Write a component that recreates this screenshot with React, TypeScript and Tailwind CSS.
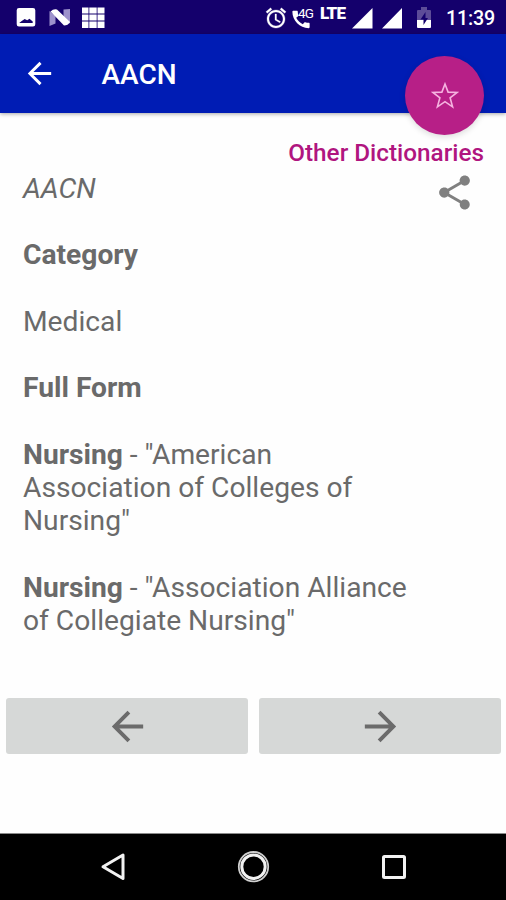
import React from "react";

const ROBOTO = "font-['Roboto','Liberation_Sans',sans-serif]";

function ArrowBack({ className }: { className: string }) {
  return (
    <svg viewBox="0 0 24 24" fill="currentColor" className={className}>
      <path d="M20 11H7.83l5.59-5.59L12 4l-8 8 8 8 1.41-1.41L7.83 13H20v-2z" />
    </svg>
  );
}

function StatusBar() {
  return (
    <div className="flex h-[34px] items-start bg-[#14006c] text-white">
      <svg viewBox="0 0 110 34" className="h-[34px] w-[110px]">
        <path
          fillRule="evenodd"
          fill="#fff"
          d="M19 8h14q2.300 0 2.300 2.300V24.200q0 2.300-2.300 2.300H19q-2.300 0-2.300-2.300V10.300Q16.700 8 19 8zM19.200 23h13.500v-1.500l-3.200-2.800-2.300 1.600-2.500-1.300-3 2z"
        />
        <path fill="#9d92cc" d="M49.500 11l6 5v7.500l-6 2.500zM63.500 9.500l6.500-.5v14.500l-6.500-4z" />
        <path fill="#fff" d="M50.500 11.500q3-3 6.500-2L70 22q-2 3.500-6 3.500z" />
        <path
          fill="#fff"
          d="M82 7.500h6.500v5.900H82zM89.300 7.500h7.400v5.900h-7.400zM97.500 7.500h7v5.900h-7zM82 14.400h6.500v6H82zM89.300 14.400h7.400v6h-7.400zM97.500 14.400h7v6h-7zM82 21.400h6.500V28H82zM89.300 21.400h7.400V28h-7.400zM97.500 21.400h7V28h-7z"
        />
      </svg>
      <div className="ml-auto flex pr-[11px]">
        <svg viewBox="0 0 24 24" fill="#fff" stroke="#fff" strokeWidth="0.300" className="mt-[5.500px] size-6">
          <path d="M22 5.720l-4.600-3.860-1.290 1.530 4.600 3.860L22 5.720zM7.880 3.390L6.600 1.860 2 5.710l1.290 1.530 4.590-3.850zM12.500 8H11v6l4.750 2.850.750-1.230-4-2.370V8zM12 4c-4.970 0-9 4.030-9 9s4.020 9 9 9c4.970 0 9-4.030 9-9s-4.030-9-9-9zm0 16c-3.870 0-7-3.130-7-7s3.130-7 7-7 7 3.130 7 7-3.130 7-7 7z" />
        </svg>
        <div className="relative ml-[1px] w-[31px]">
          <svg viewBox="0 0 24 24" fill="#fff" className="mt-[8px] h-[23px] w-6">
            <path d="M20.010 15.380c-1.230 0-2.420-.200-3.530-.560-.350-.120-.740-.030-1.010.240l-1.570 1.970c-2.830-1.350-5.480-3.900-6.890-6.830l1.950-1.660c.270-.280.350-.670.240-1.020-.370-1.110-.560-2.300-.560-3.530 0-.540-.450-.990-.990-.990H4.190C3.650 3 3 3.240 3 3.990 3 13.280 10.730 21 20.010 21c.710 0 .990-.630.990-1.180v-3.450c0-.540-.450-.990-.990-.990z" />
          </svg>
          <span className="absolute top-[6px] left-[9px] text-[13.500px] leading-[15px] tracking-[-0.8px]">4G</span>
        </div>
        <span className="w-[32px] pt-[4px] text-[17px] leading-[18px] font-black tracking-[-0.9px]">LTE</span>
        <svg viewBox="0 0 52 34" className="h-[34px] w-[52px]" fill="#fff">
          <path d="M0 28.500L20.500 8v20.500zM30 28.500L50 8v20.500z" />
        </svg>
        <svg viewBox="0 0 14 34" className="ml-[13px] h-[34px] w-[14px]">
          <path fill="#5d4c98" d="M4 7h6v3h3q1 0 1 1v9H0v-9q0-1 1-1h3z" />
          <path fill="#fff" d="M0 20h14v7q0 1-1 1H1q-1 0-1-1z" />
          <path fill="#14006c" d="M8.500 12v6H11L6.500 25v-5.500H3.500z" />
        </svg>
        <span className="ml-[15px] w-[49px] pt-[7px] text-[19.700px] leading-[23px] font-medium tracking-[-0.2px] whitespace-nowrap">
          11:39
        </span>
      </div>
    </div>
  );
}

function AppBar() {
  return (
    <header className="relative z-10 flex h-[79px] items-center bg-[#001cb4] pl-[22px] text-white shadow-[0_1px_4px_rgba(0,0,0,0.35)]">
      <ArrowBack className="size-[35px]" />
      <h1 className="ml-[44.500px] pt-[3px] text-[28px] leading-8 font-medium">AACN</h1>
      <button className="absolute top-[22px] right-[22px] flex size-[79px] items-center justify-center rounded-full bg-[#b71f87] shadow-[0_2px_6px_rgba(0,0,0,0.14)]">
        <svg viewBox="0 0 28 27" className="h-[27px] w-[28px]" fill="none" stroke="#f5b3e0" strokeWidth="1.600">
          <path d="M14 2l3.100 8.100 9.100.300-7.100 5.400 2.500 9L14 19.700 6.400 24.800l2.500-9-7.100-5.400 9.100-.300z" />
        </svg>
      </button>
    </header>
  );
}

export default function App() {
  return (
    <div className={`flex h-[900px] w-[506px] flex-col overflow-hidden bg-[#fefefe] ${ROBOTO}`}>
      <StatusBar />
      <AppBar />
      <main className="flex flex-1 flex-col">
        <a className="mt-[26px] mr-[22px] self-end text-[24.300px] leading-[28px] font-medium whitespace-nowrap text-[#b0157f]">
          Other Dictionaries
        </a>
        <div className="mt-[4px] flex h-[527px] justify-between pl-[23px]">
          <div className="mt-[0.600px] w-[395px] text-[28.200px] leading-[33.270px] text-[#6a6a6a]">
            <p className="italic">AACN</p>
            <p className="mt-[33.270px] font-bold">Category</p>
            <p className="mt-[33.270px]">Medical</p>
            <p className="mt-[33.270px] font-bold">Full Form</p>
            <p className="mt-[33.270px]">
              <b>Nursing</b> - "American
              <br />
              Association of Colleges of
              <br />
              Nursing"
            </p>
            <p className="mt-[33.270px]">
              <b>Nursing</b> - "Association Alliance
              <br />
              of Collegiate Nursing"
            </p>
          </div>
          <svg viewBox="0 0 24 24" className="mt-[1px] mr-[31px] size-[41px] shrink-0" fill="#808080">
            <path d="M18 16.080c-.760 0-1.440.300-1.960.770L8.910 12.700c.050-.230.090-.460.090-.700s-.040-.470-.090-.700l7.050-4.110c.540.500 1.250.810 2.040.810 1.660 0 3-1.340 3-3s-1.340-3-3-3-3 1.340-3 3c0 .240.040.470.090.700L8.040 9.810C7.500 9.310 6.790 9 6 9c-1.660 0-3 1.340-3 3s1.340 3 3 3c.790 0 1.500-.310 2.040-.810l7.120 4.160c-.050.210-.080.430-.080.650 0 1.610 1.310 2.920 2.920 2.920s2.920-1.310 2.920-2.920-1.310-2.920-2.920-2.920z" />
          </svg>
        </div>
        <div className="grid grid-cols-2 gap-[11px] pr-[5px] pl-[6px]">
          <button className="flex h-[56px] items-center justify-center rounded-[3px] bg-[#d6d8d7] text-[#6b6b6b]">
            <ArrowBack className="size-[47px]" />
          </button>
          <button className="flex h-[56px] items-center justify-center rounded-[3px] bg-[#d6d8d7] text-[#6b6b6b]">
            <ArrowBack className="size-[47px] rotate-180" />
          </button>
        </div>
      </main>
      <nav className="flex h-[67px] justify-center border-t border-[#8a8a8a] bg-black">
        <svg viewBox="-10 0 320 66" className="h-[66px] w-[320px]" fill="none" stroke="#f2f2f2">
          <path strokeWidth="3" strokeLinejoin="round" d="M20 21v23.500L0 32.700z" />
          <circle cx="150.500" cy="32.700" r="14.700" strokeWidth="1.800" stroke="#d0d0d0" />
          <circle cx="150.500" cy="32.700" r="11.700" strokeWidth="3" />
          <rect x="280.500" y="22.500" width="21" height="21" rx="1" strokeWidth="3" />
        </svg>
      </nav>
    </div>
  );
}
